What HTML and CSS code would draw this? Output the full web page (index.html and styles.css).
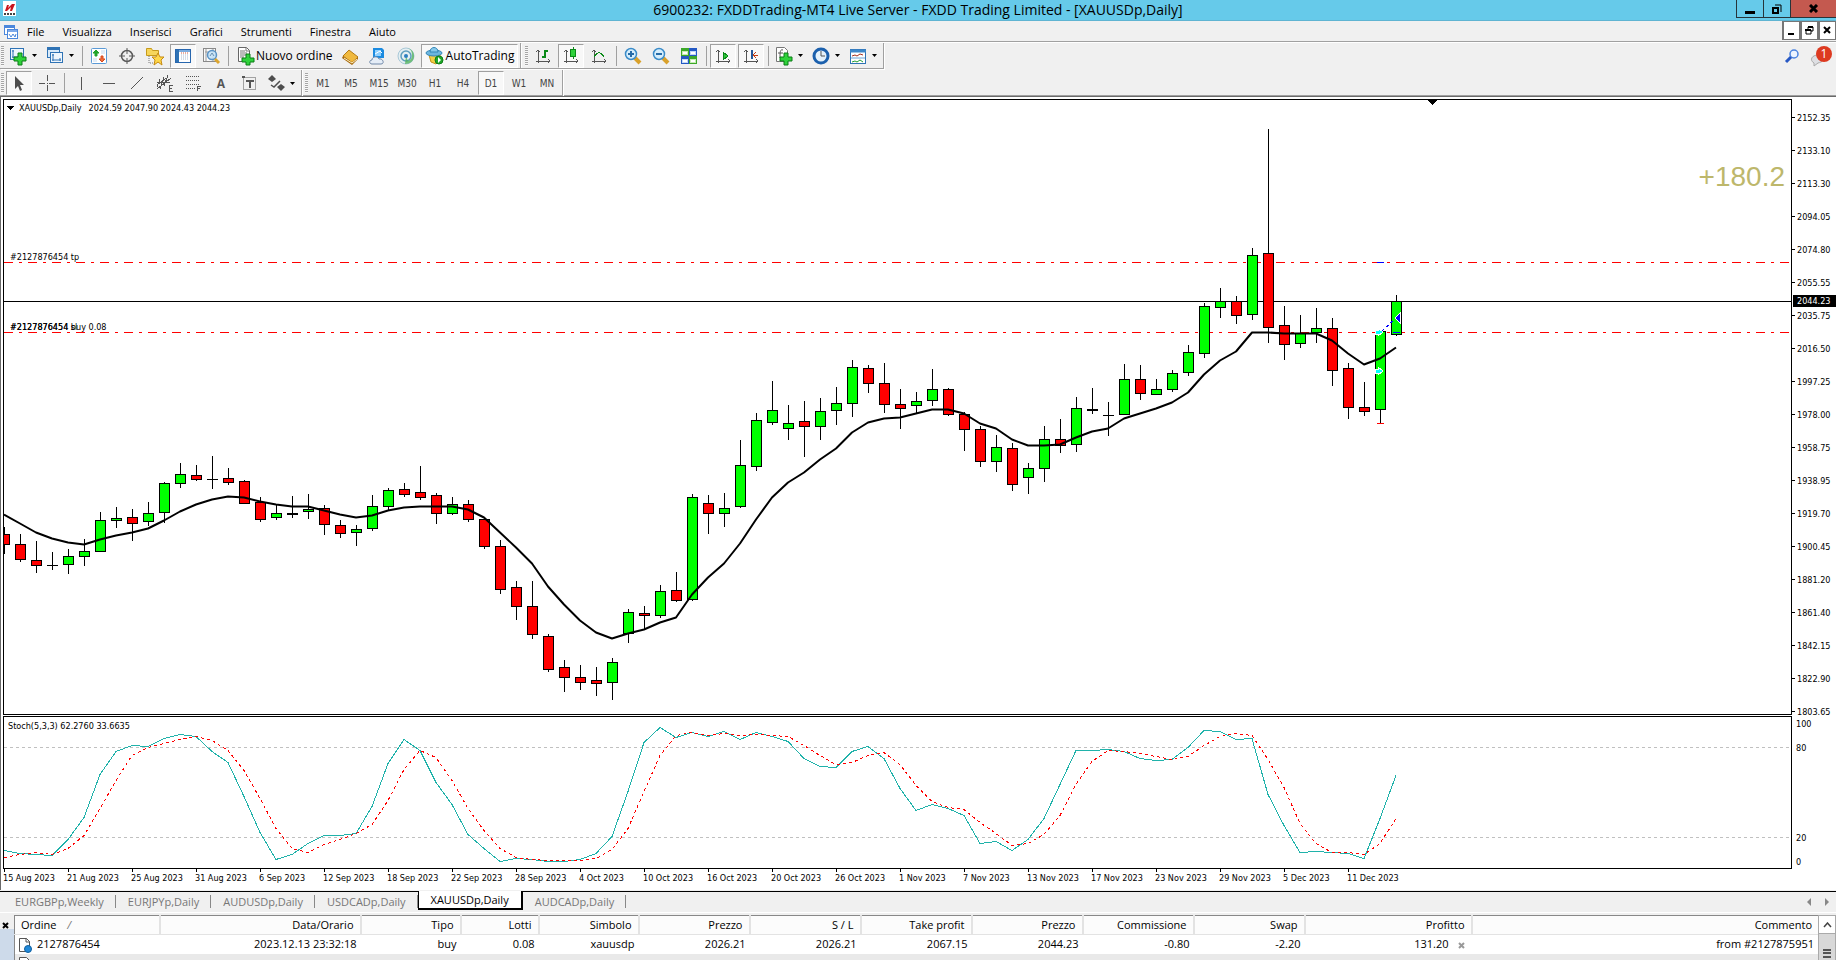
FILE: index.html
```
<!DOCTYPE html>
<html lang="it">
<head>
    <meta charset="UTF-8">
    <meta name="viewport" content="width=device-width, initial-scale=1.0">
    <title>6900232: FXDDTrading-MT4 Live Server - FXDD Trading Limited - [XAUUSDp,Daily]</title>
    <link rel="stylesheet" href="styles.css">
</head>
<body>
    <header class="titlebar">
        <svg class="app-logo" width="13" height="15" viewBox="0 0 13 15"><rect width="13" height="15" fill="#fff"/><path d="M2 10 4 4h2l-1 3 4-4h3L9 10H7l1-4-4 4z" fill="#c8141e"/><path d="M1 13h11" stroke="#444" stroke-width="2" stroke-dasharray="2 1"/></svg>
        <h1>6900232: FXDDTrading-MT4 Live Server - FXDD Trading Limited - [XAUUSDp,Daily]</h1>
        <div class="window-buttons">
            <button class="win-min" aria-label="Riduci"><svg width="10" height="10"><path d="M0 7h10v3H0z"/></svg></button>
            <button class="win-max" aria-label="Ripristina"><svg width="10" height="10"><path d="M1 4h5v5H1z" fill="none" stroke="#000" stroke-width="2"/><path d="M3 1h6v7" fill="none" stroke="#000"/></svg></button>
            <button class="win-close" aria-label="Chiudi"><svg width="10" height="9"><path d="m1 1 7 7M8 1 1 8" stroke="#000" stroke-width="3"/></svg></button>
        </div>
    </header>

    <nav class="menubar">
        <svg width="16" height="16" viewBox="0 0 16 16"><rect x="1.5" y="1.5" width="10" height="9" fill="#fff" stroke="#4b87dc"/><path d="M2 3h9" stroke="#4b87dc" stroke-width="2"/><rect x="4.5" y="5.5" width="10" height="9" fill="#fff" stroke="#4b87dc"/><path d="M5 7h9" stroke="#7eaaea" stroke-width="2"/><path d="m6 10 2 3 2-3 2 3 1-3" fill="none" stroke="#4b87dc"/></svg>
        <button>File</button>
        <button>Visualizza</button>
        <button>Inserisci</button>
        <button>Grafici</button>
        <button>Strumenti</button>
        <button>Finestra</button>
        <button>Aiuto</button>
        <div class="mdi-buttons">
            <button aria-label="Riduci grafico"><svg width="9" height="9"><path d="M1 7h6v2H1z"/></svg></button>
            <button aria-label="Ripristina grafico"><svg width="9" height="9"><path d="M1 4h5v4H1zM3 3V1h5v4H6" fill="none" stroke="#000"/><path d="M0 4h6M3 1h5" stroke="#000" stroke-width="2"/></svg></button>
            <button aria-label="Chiudi grafico"><svg width="9" height="9"><path d="m1 1 6 6M7 1 1 7" stroke="#000" stroke-width="2"/></svg></button>
        </div>
    </nav>

    <div class="toolbar">
        <div class="group">
            <span class="grip"></span>
            <button class="tool drop" aria-label="Nuovo grafico"><svg width="20" height="20"><rect x="2.5" y="2.5" width="13" height="11" fill="#eef6fd" stroke="#2f73b5"/><path d="M5 4v8M4 5h2M4 11h10M12 9v3" stroke="#2f73b5" fill="none"/><path d="M10 7h4v4h4v4h-4v4h-4v-4H6v-4h4z" fill="#2fd23b" stroke="#0a7d17"/></svg><svg class="caret" width="5" height="3"><path d="M0 0h5L2.5 3z"/></svg></button>
            <button class="tool drop" aria-label="Profili"><svg width="20" height="20"><rect x="2.5" y="1.5" width="12" height="10" fill="#d8eafa" stroke="#2f73b5"/><path d="M3 3h11" stroke="#2f73b5" stroke-width="2"/><rect x="5.5" y="6.5" width="12" height="10" fill="#eef6fd" stroke="#2f73b5"/><path d="M8 8v7M7 9h2M7 14h9M15 12v3" stroke="#2f73b5"/></svg><svg class="caret" width="5" height="3"><path d="M0 0h5L2.5 3z"/></svg></button>
            <span class="sep"></span>
            <button class="tool" aria-label="Market Watch"><svg width="20" height="20"><rect x="2.5" y="2.5" width="15" height="15" rx="1" fill="#fff" stroke="#5b9ad6"/><path d="M12 5h4M12 7h4M4 13h4M4 15h4" stroke="#c4daf0"/><path d="m7 4 3 3H8v3H6V7H4z" fill="#22a32b" stroke="#22a32b"/><path d="m13 16-3-3h2v-3h2v3h2z" fill="#f0703c" stroke="#d8481f"/></svg></button>
            <button class="tool" aria-label="Finestra dati"><svg width="20" height="20"><circle cx="10" cy="10" r="5.5" fill="none" stroke="#5a5a5a" stroke-width="1.5"/><path d="M10 2v6M10 12v6M2 10h6M12 10h6" stroke="#5a5a5a"/></svg></button>
            <button class="tool" aria-label="Preferiti"><svg width="20" height="20"><path d="M1.500 4V2.500h5l1 2h6v5h-12z" fill="#f7d65a" stroke="#c69a1b"/><path d="M4 10v7h7" fill="none" stroke="#777" stroke-dasharray="1 1"/><path d="m13 7 2 4h4l-3 3 1 5-4-3-4 3 1-5-3-3h4z" fill="#ffd84a" stroke="#c68b12"/></svg></button>
            <button class="tool pressed" aria-label="Navigatore"><svg width="20" height="20"><rect x="2.5" y="3.5" width="15" height="13" fill="#fff" stroke="#2766ae"/><path d="M3 5h14" stroke="#79acdf" stroke-width="2"/><path d="M3 4h3v12H3z" fill="#2f73b5"/><path d="M8 7h8" stroke="#d4583b" stroke-dasharray="1 1"/><path d="M8 9h8M8 11h8M8 13h8" stroke="#a5bcd2" stroke-dasharray="1 1"/></svg></button>
            <button class="tool" aria-label="Tester strategia"><svg width="20" height="20"><rect x="2.5" y="2.5" width="12" height="13" fill="#fafafa" stroke="#8a8a8a"/><path d="M5 3v12M12 3v12M4 6h3" stroke="#9b9b9b"/><circle cx="11" cy="9" r="4.5" fill="#c5e3f7" fill-opacity=".9" stroke="#5b94c6" stroke-width="1.5"/><path d="m9 10 2-3 2 3" stroke="#6b93b5" fill="none"/><path d="m14 13 4 4" stroke="#dca52d" stroke-width="3"/></svg></button>
            <span class="sep"></span>
            <button class="tool order"><svg width="20" height="20"><path d="M3.500 1.500h8l3 3v11h-11z" fill="#fff" stroke="#666"/><path d="M11 2v3h3M5 5h5M5 7h7M5 9h7M5 11h4" stroke="#777" fill="none"/><path d="M11 8h4v4h4v4h-4v3h-4v-3H7v-4h4z" fill="#2fd23b" stroke="#0a7d17"/></svg><span>Nuovo ordine</span></button>
            <button class="tool" aria-label="MetaEditor"><svg width="20" height="20"><path d="m3 10 6-6 9 7-6 6z" fill="#f0b93e" stroke="#b47a14"/><path d="m3 10 9 6 6-5v2l-6 6-10-7z" fill="#a96c10"/><path d="m4 12 8 5 5-4" fill="none" stroke="#fff2c5"/></svg></button>
            <button class="tool" aria-label="MQL5"><svg width="20" height="20"><path d="M5 2h9l2 2v8H5z" fill="#1c8be0"/><path d="M7 4h6v6H7z" fill="#8ed0ff"/><path d="m7 8 5-3 2 2" stroke="#fff" fill="none"/><path d="M4 18c-3 0-3-4 0-4 0-4 6-4 7-1 4-1 6 5 2 5z" fill="#e5edf7" stroke="#7088a8"/></svg></button>
            <button class="tool" aria-label="Segnali"><svg width="20" height="20"><circle cx="10" cy="10" r="8" fill="#e5eff2" stroke="#a9c8d8"/><circle cx="10" cy="10" r="5" fill="none" stroke="#5f9fbe" stroke-width="1.5"/><path d="M10 10 9 18c5 0 9-3 9-8s-4-8-8-8c4 0 6 3 6 7s-2 5-4 6z" fill="#4bb054" fill-opacity=".75"/><circle cx="10" cy="10" r="2" fill="#2d7fc0"/></svg></button>
            <button class="tool auto pressed"><svg width="20" height="20"><path d="m4 9 2 7 5 2 5-6-1-3z" fill="#f3cf43" stroke="#c19319"/><ellipse cx="9" cy="7" rx="8" ry="3" fill="#6bb6df" stroke="#3486b6"/><path d="M5 6c0-6 8-6 8 0z" fill="#86c9eb" stroke="#3486b6"/><circle cx="14" cy="14" r="4" fill="#20a828" stroke="#0e7d18"/><path d="m13 11 3 3-3 3z" fill="#fff"/></svg><span>AutoTrading</span></button>
        </div>
        <div class="group">
            <span class="grip"></span>
            <button class="tool" aria-label="Grafico a barre"><svg class="axis" width="20" height="20"><path d="M5 4v13M3 15h14M3 6l2-2 2 2M15 13l2 2-2 2"/><path class="green" d="M12 4v8M12 5h3M9 11h3" stroke-width="2"/></svg></button>
            <button class="tool pressed" aria-label="Candele"><svg class="axis" width="20" height="20"><path d="M5 4v13M3 15h14M3 6l2-2 2 2M15 13l2 2-2 2"/><path d="M12 1v12" stroke="#0a8a18"/><rect x="9.5" y="3.5" width="5" height="7" fill="#2fd23b" stroke="#0a8a18"/></svg></button>
            <button class="tool" aria-label="Linea"><svg class="axis" width="20" height="20"><path d="M5 4v13M3 15h14M3 6l2-2 2 2M15 13l2 2-2 2"/><path class="green" d="M5 11c4-6 7-5 10 0"/></svg></button>
            <span class="sep"></span>
            <button class="tool" aria-label="Zoom avanti"><svg width="20" height="20"><path d="m12 12 5 5" stroke="#d9a12b" stroke-width="4"/><circle cx="8" cy="8" r="5.5" fill="#d6eefc" stroke="#3b8cc9" stroke-width="1.5"/><path d="M5 8h6M8 5v6" stroke="#276ca8" stroke-width="2"/></svg></button>
            <button class="tool" aria-label="Zoom indietro"><svg width="20" height="20"><path d="m12 12 5 5" stroke="#d9a12b" stroke-width="4"/><circle cx="8" cy="8" r="5.5" fill="#d6eefc" stroke="#3b8cc9" stroke-width="1.5"/><path d="M5 8h6" stroke="#276ca8" stroke-width="2"/></svg></button>
            <button class="tool" aria-label="Affianca"><svg width="20" height="20"><path d="M2 2h8v8H2zM10 10h8v8h-8z" fill="#3ca829"/><path d="M10 2h8v8h-8zM2 10h8v8H2z" fill="#2459c4"/><path d="M3 5h6v4H3zM11 13h6v4h-6z" fill="#c6ecb4"/><path d="M11 5h6v4h-6zM3 13h6v4H3z" fill="#c3d8f8"/><path d="M4 7h4M12 7h4M4 15h4M12 15h4" stroke="#fff" stroke-width="2"/></svg></button>
            <span class="sep"></span>
            <button class="tool pressed" aria-label="Scorrimento automatico"><svg class="axis" width="20" height="20"><path d="M5 4v13M3 15h14M3 6l2-2 2 2M15 13l2 2-2 2"/><path d="m10 6 5 4-5 4z" fill="#2fc23b" stroke="#0a8a18"/></svg></button>
            <button class="tool pressed" aria-label="Spostamento grafico"><svg class="axis" width="20" height="20"><path d="M5 4v13M3 15h14M3 6l2-2 2 2M15 13l2 2-2 2"/><path d="M11 4v9" stroke="#23579a" stroke-width="2"/><path d="M12 9h5M15 6l-3 3 3 3" stroke="#c43c10"/></svg></button>
            <span class="sep"></span>
            <button class="tool drop" aria-label="Indicatori"><svg width="20" height="20"><path d="M2.500 1.500h8l3 3v11h-11z" fill="#fff" stroke="#777"/><path d="M9 4c-3-1-3 2-3 8M4 7h5" stroke="#555" fill="none"/><path d="M10 7h4v4h4v4h-4v4h-4v-4H6v-4h4z" fill="#2fd23b" stroke="#0a7d17"/></svg><svg class="caret" width="5" height="3"><path d="M0 0h5L2.5 3z"/></svg></button>
            <button class="tool drop" aria-label="Periodi"><svg width="20" height="20"><circle cx="10" cy="10" r="7" fill="#e4f2fc" stroke="#1b60ad" stroke-width="3"/><path d="M10 5v5h4" fill="none" stroke="#555"/></svg><svg class="caret" width="5" height="3"><path d="M0 0h5L2.5 3z"/></svg></button>
            <button class="tool drop" aria-label="Modelli"><svg width="20" height="20"><rect x="2.5" y="3.5" width="15" height="14" fill="#fff" stroke="#2f73b5"/><path d="M2 5h16" stroke="#3d87c9" stroke-width="3"/><path d="m4 10 3-1 2 1 3-2 3 1" fill="none" stroke="#a72f1c"/><path d="M3 12h14" stroke="#6ca4d6"/><path d="m4 16 3-1 2 1 3-2 3 2" fill="none" stroke="#249e31"/></svg><svg class="caret" width="5" height="3"><path d="M0 0h5L2.5 3z"/></svg></button>
        </div>
        <div class="notifications">
            <button aria-label="Cerca"><svg width="16" height="16"><circle cx="10" cy="5" r="4" fill="#edf4ff" stroke="#4b83df" stroke-width="1.5"/><path d="m7 8-5 5" stroke="#2758c4" stroke-width="3"/></svg></button>
            <button class="bubble" aria-label="Messaggi"><svg width="16" height="16"><path d="M4 12c-5-3-2-8 4-8s9 6 0 8l-4 3z" fill="#dedfe3" stroke="#aaa"/></svg><span class="badge">1</span></button>
        </div>
    </div>

    <div class="toolbar second">
        <div class="group">
            <span class="grip"></span>
            <button class="tool pressed" aria-label="Cursore"><svg width="20" height="20"><path d="M6 3v13l3-3 2 5 2-1-2-5h4z" fill="#4d4d4d"/></svg></button>
            <button class="tool" aria-label="Mirino"><svg class="line" width="20" height="20"><path d="M10 2v6M10 12v6M2 10h6M12 10h6M10 10h1"/></svg></button>
            <span class="sep"></span>
            <button class="tool" aria-label="Linea verticale"><svg class="line" width="20" height="20"><path d="M10 4v13"/></svg></button>
            <button class="tool" aria-label="Linea orizzontale"><svg class="line" width="20" height="20"><path d="M4 10h12"/></svg></button>
            <button class="tool" aria-label="Linea di tendenza"><svg class="line" width="20" height="20"><path d="M4 16 16 4"/></svg></button>
            <button class="tool" aria-label="Canale"><svg class="line" width="20" height="20"><path d="m2 12 9-7M2 16 16 5M5 16l4-12M2 14l3-8M9 13l4-11M2 9h13"/><path d="M18 12h-4v6h4M14 15h3"/></svg></button>
            <button class="tool" aria-label="Fibonacci"><svg class="line" width="20" height="20"><path d="M3 3h14M3 7h14M3 11h14M3 15h9" stroke-dasharray="1 1"/><path d="M18 13h-4v5M14 15h3"/></svg></button>
            <button class="tool letter">A</button>
            <button class="tool" aria-label="Etichetta"><svg width="20" height="20"><rect x="4.5" y="4.5" width="12" height="12" fill="none" stroke="#555" stroke-dasharray="1 1"/><path d="M3 3h3v2H3z" fill="#555"/><path d="M7 8h8M11 8v7" stroke="#555" stroke-width="2"/></svg></button>
            <button class="tool drop" aria-label="Frecce"><svg width="20" height="20"><path d="m2 6 4-4 4 4-4 3zM11 14l4-3 4 3-4 4z" fill="#4d4d4d"/><path d="m5 12 3 2 6-6" fill="none" stroke="#4d4d4d" stroke-width="1.5"/></svg><svg class="caret" width="5" height="3"><path d="M0 0h5L2.5 3z"/></svg></button>
        </div>
        <div class="group">
            <span class="grip"></span>
            <button class="tool period">M1</button>
            <button class="tool period">M5</button>
            <button class="tool period">M15</button>
            <button class="tool period">M30</button>
            <button class="tool period">H1</button>
            <button class="tool period">H4</button>
            <button class="tool period pressed">D1</button>
            <button class="tool period">W1</button>
            <button class="tool period">MN</button>
        </div>
    </div>

    <main class="chart">
        <section class="plot price">
            <svg id="priceChart" class="drawing"></svg>
            <p class="caption"><span>XAUUSDp,Daily</span> <span>2024.59 2047.90 2024.43 2044.23</span></p>
            <p class="order-label tp">#2127876454 tp</p>
            <p class="order-label buy">#2127876454 buy 0.08</p>
            <p class="order-label buy">#2127876454 sl</p>
            <p class="pips">+180.2</p>
        </section>
        <div class="scale price-scale">
            <ol id="priceScale"></ol>
            <span class="current">2044.23</span>
        </div>
        <section class="plot stoch">
            <svg id="stochChart" class="drawing"></svg>
            <p class="caption">Stoch(5,3,3) 62.2760 33.6635</p>
        </section>
        <div class="scale stoch-scale">
            <span class="s100">100</span>
            <span class="s80">80</span>
            <span class="s20">20</span>
            <span class="s0">0</span>
        </div>
        <ol id="dates" class="dates"></ol>
    </main>

    <nav class="tabs">
        <button>EURGBPp,Weekly</button>
        <button>EURJPYp,Daily</button>
        <button>AUDUSDp,Daily</button>
        <button>USDCADp,Daily</button>
        <button class="active">XAUUSDp,Daily</button>
        <button>AUDCADp,Daily</button>
        <div class="tab-scroll">
            <button aria-label="Indietro"><svg width="4" height="8"><path d="M4 0v8L0 4z"/></svg></button>
            <button aria-label="Avanti"><svg width="4" height="8"><path d="M0 0v8l4-4z"/></svg></button>
        </div>
    </nav>

    <section class="terminal">
        <div class="side"><button aria-label="Chiudi terminale"><svg width="7" height="7"><path d="m1 1 5 5M6 1 1 6" stroke="#000" stroke-width="2"/></svg></button></div>
        <table>
            <colgroup>
                <col class="c-order"><col class="c-date"><col class="c-mid"><col class="c-lots"><col class="c-mid"><col class="c-num"><col class="c-num"><col class="c-num"><col class="c-num"><col class="c-num"><col class="c-num"><col class="c-profit"><col>
            </colgroup>
            <thead>
                <tr><th>Ordine <i>/</i></th><th>Data/Orario</th><th>Tipo</th><th>Lotti</th><th>Simbolo</th><th>Prezzo</th><th>S / L</th><th>Take profit</th><th>Prezzo</th><th>Commissione</th><th>Swap</th><th>Profitto</th><th>Commento</th></tr>
            </thead>
            <tbody>
                <tr>
                    <td><svg width="16" height="16"><path d="M1.500 1.500h7l3 3v10h-10z" fill="#fff" stroke="#555"/><path d="M8 1v4h4" fill="none" stroke="#555"/><circle cx="10" cy="12" r="3.500" fill="#2289d8" stroke="#0f5f9f"/></svg>2127876454</td>
                    <td>2023.12.13 23:32:18</td><td>buy</td><td>0.08</td><td>xauusdp</td><td>2026.21</td><td>2026.21</td><td>2067.15</td><td>2044.23</td><td>-0.80</td><td>-2.20</td>
                    <td>131.20<button class="close-order" aria-label="Chiudi ordine"><svg width="7" height="7"><path d="m1 1 5 5M6 1 1 6" stroke="#999" stroke-width="2"/></svg></button></td>
                    <td>from #2127875951</td>
                </tr>
                <tr class="balance">
                    <td colspan="13"><svg width="16" height="16"><path d="M1.500 1.500h7l3 3v10h-10z" fill="#fff" stroke="#555"/></svg></td>
                </tr>
            </tbody>
        </table>
        <div class="scrollbar">
            <button aria-label="Su"><svg width="9" height="6"><path d="m1 5 3.500-4L8 5" fill="none" stroke="#444" stroke-width="1.5"/></svg></button>
            <span class="thumb"></span>
        </div>
    </section>
    <script src="script.js"></script>
</body>
</html>
```

FILE: styles.css
```
* {
    box-sizing: border-box;
}

body {
    margin: 0;
    height: 100vh;
    display: flex;
    flex-direction: column;
    overflow: hidden;
    background: #f0f0f0;
    color: #000;
    font-family: "Open Sans", "Noto Sans", sans-serif;
    font-size: 12px;
}

button {
    margin: 0;
    padding: 0;
    border: 0;
    background: none;
    color: inherit;
    font: inherit;
    white-space: nowrap;
}

svg {
    display: block;
    flex: none;
}

p, h1, ol {
    margin: 0;
    padding: 0;
    list-style: none;
    font-weight: normal;
}

/* TITLE AND MENU */
.titlebar {
    flex: none;
    display: flex;
    align-items: flex-start;
    height: 21px;
    background: #66caea;
    border-bottom: 1px solid #5fb4d2;
}

.app-logo {
    margin: 1px 0 0 3px;
}

h1 {
    flex: 1;
    padding-left: 84px;
    font-size: 14px;
    line-height: 19px;
    text-align: center;
}

.window-buttons {
    display: flex;
    height: 18px;
}

.window-buttons button {
    display: flex;
    align-items: center;
    justify-content: center;
    width: 27px;
    border: 1px solid #27343a;
    border-width: 0 0 1px 1px;
}

.window-buttons .win-close {
    width: 46px;
    background: #c4594f;
}

.menubar {
    flex: none;
    display: flex;
    align-items: center;
    height: 22px;
    padding-left: 3px;
    border-bottom: 1px solid #fff;
    box-shadow: inset 0 -1px #a0a0a0;
    font-size: 11px;
}

.menubar > button {
    padding: 0 9px;
    line-height: 18px;
}

.menubar > svg {
    margin-right: -1px;
}

.mdi-buttons {
    display: flex;
    align-self: flex-start;
    margin-left: auto;
}

.mdi-buttons button {
    display: flex;
    align-items: center;
    justify-content: center;
    width: 18px;
    height: 19px;
    border: 1px solid #767676;
    border-left-width: 2px;
    background: #fff;
}

/* TOOLBARS */
.toolbar {
    flex: none;
    display: flex;
    height: 27px;
}

.toolbar.second {
    border-bottom: 1px solid #696969;
    box-shadow: inset 0 -1px #a0a0a0;
}

.group {
    display: flex;
    align-items: center;
    height: 26px;
    padding-right: 1px;
    border-right: 1px solid #a0a0a0;
    border-bottom: 1px solid #a0a0a0;
    box-shadow: 1px 1px #fff;
}

.second .group {
    border-bottom: 0;
    box-shadow: 1px 0 #fff;
}

.group + .group {
    padding-left: 3px;
}

.second .group + .group {
    padding-left: 2px;
}

.grip {
    width: 3px;
    height: 20px;
    margin: 0 1px;
    background: repeating-linear-gradient(#a5a5a5 0 1px, #f8f8f8 1px 2px);
}

.sep {
    width: 6px;
    height: 20px;
    background: linear-gradient(#a0a0a0, #a0a0a0) center / 1px 100% no-repeat;
}

.tool {
    display: flex;
    align-items: center;
    justify-content: center;
    width: 28px;
    height: 24px;
}

.pressed {
    width: 26px;
    margin: 0 1px;
    border: 1px solid #fff;
    border-top-color: #a0a0a0;
    border-left-color: #a0a0a0;
    background: #f8f8f8;
}

.drop {
    justify-content: flex-start;
    gap: 4px;
    width: 37px;
    padding-left: 3px;
}

.order {
    justify-content: flex-start;
    gap: 1px;
    width: 105px;
    padding-left: 4px;
}

.auto {
    gap: 1px;
    width: 97px;
}

.axis, .line {
    fill: none;
    stroke: #555;
    shape-rendering: crispEdges;
}

.axis .green {
    stroke: #0a8a18;
}

.letter {
    color: #555;
    font-size: 12px;
    font-weight: bold;
}

.period {
    color: #444;
    font-family: "DejaVu Sans Condensed", "DejaVu Sans", sans-serif;
    font-size: 10px;
}

.notifications {
    display: flex;
    gap: 10px;
    align-items: center;
    margin-left: auto;
    padding-right: 4px;
}

.bubble {
    position: relative;
    width: 22px;
    height: 20px;
    padding-top: 4px;
}

.badge {
    position: absolute;
    top: -1px;
    right: 0;
    width: 16px;
    height: 16px;
    border-radius: 50%;
    background: #dd3a20;
    color: #fff;
    font-size: 12px;
    line-height: 16px;
    text-align: center;
}

/* CHART */
.chart {
    flex: 1;
    min-height: 0;
    display: grid;
    grid-template-columns: 1fr 44px;
    grid-template-rows: 1fr 153px 20px;
    row-gap: 1px;
    padding: 2px 0 0 2px;
    border-left: 1px solid #696969;
    background: #fff;
    font-family: "DejaVu Sans Condensed", "DejaVu Sans", sans-serif;
    font-size: 9px;
    line-height: 12px;
}

.plot {
    position: relative;
    min-height: 0;
    border: 1px solid #000;
}

.drawing {
    width: 100%;
    height: 100%;
    shape-rendering: crispEdges;
}

.caption, .order-label, .pips {
    position: absolute;
    white-space: nowrap;
}

.caption {
    display: flex;
    gap: 7px;
    top: 3px;
    left: 4px;
}

.price .caption {
    top: 2px;
    left: 15px;
}

.order-label {
    left: 6px;
}

.tp {
    top: 151px;
}

.buy {
    top: 221px;
}

.pips {
    top: 61px;
    right: 6px;
    color: #bdb76b;
    font: 28px/32px "Liberation Sans", Arial, sans-serif;
}

.scale {
    position: relative;
    min-height: 0;
}

.price-scale li {
    display: flex;
    align-items: center;
    height: 33px;
}

.price-scale ol {
    margin-top: 2px;
}

.price-scale li::before {
    content: "";
    width: 3px;
    height: 1px;
    margin-right: 2px;
    background: #000;
}

.current {
    position: absolute;
    top: 196px;
    left: 1px;
    right: 0;
    padding-left: 4px;
    background: #000;
    color: #fff;
}

.stoch-scale span {
    position: absolute;
    left: 4px;
}

.s100 { top: 2px; }
.s80 { top: 26px; }
.s20 { top: 116px; }
.s0 { top: 140px; }

.dates {
    grid-column: 1 / 3;
    display: flex;
    margin-top: -1px;
    white-space: nowrap;
}

.dates li {
    width: 64px;
    flex: none;
}

.dates li::before {
    content: "";
    display: block;
    width: 1px;
    height: 3px;
    margin-left: 1px;
    background: #000;
}

/* CHART TABS */
.tabs {
    flex: none;
    display: flex;
    height: 21px;
    margin-top: 1px;
    border-top: 1px solid #000;
    color: #777;
    font-size: 11px;
}

.tabs > button {
    height: 19px;
    padding: 0 12px;
    line-height: 18px;
    background: linear-gradient(#888, #888) right 3px / 1px 13px no-repeat;
}

.tabs > button:first-child {
    padding-left: 15px;
}

.tabs .active {
    margin-top: -1px;
    border: 1px solid #000;
    border-width: 0 2px 2px 1px;
    background: #fff;
    color: #000;
}

.tab-scroll {
    display: flex;
    align-items: center;
    gap: 14px;
    margin-left: auto;
    padding-right: 7px;
    fill: #888;
}

/* TERMINAL */
.terminal {
    flex: none;
    display: flex;
    height: 48px;
    border-top: 1px solid #fff;
    padding-top: 2px;
    overflow: hidden;
    font-size: 11px;
}

.side {
    width: 14px;
    height: 46px;
    padding: 2px 0 0 2px;
    background: linear-gradient(#f0f0f0 14px, #cddaea 14px);
}

table {
    flex: 1;
    table-layout: fixed;
    width: 100%;
    height: 58px;
    border-collapse: collapse;
    border-top: 1px solid #888;
    border-left: 1px solid #888;
    background: #fff;
    text-align: right;
}

th, td {
    height: 19px;
    padding: 0 4px 0 0;
    line-height: 18px;
    white-space: nowrap;
}

th {
    padding-right: 6px;
    border-right: 2px solid #e3e3e3;
    border-bottom: 1px solid #e3e3e3;
    background: #fcfcfc;
    font-weight: normal;
    text-align: right;
}

th:first-child {
    padding-left: 6px;
    text-align: left;
}

th:last-child {
    border-right: 0;
}

th i {
    margin-left: 8px;
    color: #777;
}

td:first-child {
    padding-left: 3px;
    text-align: left;
}

td svg {
    display: inline-block;
    margin-right: 3px;
    vertical-align: middle;
}

.balance td {
    background: #e9e9e9;
}

.c-order { width: 145px; }
.c-date { width: 201px; }
.c-mid { width: 100px; }
.c-lots { width: 78px; }
.c-num { width: 111px; }
.c-profit { width: 167px; }

.close-order {
    margin-left: 9px;
}

.scrollbar {
    width: 18px;
    border: 1px solid #aaa;
    background: #f0f0f0;
}

.scrollbar button {
    display: flex;
    align-items: center;
    justify-content: center;
    width: 16px;
    height: 17px;
    background: #fff;
}

.thumb {
    display: block;
    height: 60px;
    border-top: 1px solid #aaa;
    background: linear-gradient(#555 0 2px, transparent 2px 3px, #555 3px 5px, transparent 5px 7px, #555 7px 9px) center 15px / 8px 9px no-repeat #d8d8d8;
}
```

FILE: script.js
```
const STEP = 16;

// high, body top, body bottom, low, colour (g = up, r = down, k = doji)
const candles = `
527,534,544,553,r 534,544,559,561,r 541,560,565,572,r 552,565,565,569,k 549,556,564,573,g 539,551,556,565,g
512,520,551,551,g 507,518,520,527,g 509,517,523,540,r 502,513,521,525,g 482,483,512,522,g 463,474,483,487,g
465,475,479,480,r 456,479,479,488,k 468,478,482,484,r 480,481,503,503,r 497,502,519,521,r 505,513,517,519,g
496,513,514,517,k 494,509,511,518,g 505,508,524,534,r 520,525,533,537,r 525,529,532,545,g 495,506,528,530,g
488,490,506,509,g 483,489,494,496,r 466,492,497,499,r 493,495,513,523,r 497,504,513,514,g 500,504,519,521,r
517,519,546,548,r 540,546,589,593,r 581,587,606,619,r 581,606,634,638,r 634,636,669,671,r 660,667,677,691,r
665,677,682,689,r 667,680,683,695,r 658,662,682,699,g 609,612,633,642,g 606,613,615,629,r 585,591,615,617,g
572,590,600,601,r 494,497,599,600,g 495,503,513,533,r 493,508,513,526,g 440,465,506,507,g 413,420,466,470,g
381,410,422,424,g 405,423,428,439,g 401,421,426,456,r 398,411,426,439,g 387,403,410,424,g 360,367,403,416,g
365,368,383,392,r 363,383,404,412,r 389,404,408,428,r 392,401,405,413,g 369,389,400,405,g 388,389,414,415,r
412,414,429,450,r 426,429,461,466,r 435,447,461,471,g 443,448,484,490,r 463,468,477,493,g 426,439,468,481,g
419,439,445,452,r 397,408,444,451,g 388,409,410,413,k 402,415,415,435,k 364,379,414,414,g 365,379,393,399,r
379,389,394,394,g 370,373,389,391,g 345,352,372,375,g 303,306,353,357,g 288,301,307,317,g 296,301,315,323,r
248,255,314,319,g 129,253,327,342,r 306,325,344,359,r 315,333,343,347,g 308,328,332,342,g 318,328,370,385,r
363,368,407,418,r 382,407,411,415,r 331,331,409,423,g 295,301,334,335,g`.trim().split(/\s+/).map(c => c.split(','));

const average = [514,523,532,538,542,544,539,535,532,528,520,511,504,499,496,497,501,504,506,506,510,514,517,515,510,507,506,506,506,509,517,532,547,563,586,604,620,632,638,633,629,622,617,594,577,563,543,519,497,482,472,459,448,432,422,418,417,413,409,409,413,423,428,439,445,445,444,437,431,428,418,413,408,402,392,374,360,351,332,332,333,333,333,340,353,364,358,347];

const stochMain = [850,853,854,855,839,817,774,751,745,746,738,734,736,751,762,796,832,859,854,843,835,835,833,806,763,739,750,782,804,834,848,861,858,859,861,861,859,853,836,791,742,727,737,732,736,731,739,732,736,741,758,766,767,751,746,758,788,810,804,808,815,843,841,850,839,818,784,750,750,749,751,758,760,759,747,730,731,739,738,794,825,852,851,852,853,858,818,775];

const stochSignal = [857,854,852,854,848,835,808,780,755,747,743,739,736,740,750,770,798,828,848,852,844,839,833,824,800,769,750,757,780,808,830,848,857,859,860,860,860,858,849,828,791,755,735,732,735,733,735,734,735,736,745,755,764,762,755,752,764,785,801,807,809,822,833,845,843,834,815,784,761,750,751,753,756,759,756,745,736,733,735,759,787,823,843,852,852,854,843,818];

const prices = ['2152.35', '2133.10', '2113.30', '2094.05', '2074.80', '2055.55', '2035.75', '2016.50', '1997.25', '1978.00', '1958.75', '1938.95', '1919.70', '1900.45', '1881.20', '1861.40', '1842.15', '1822.90', '1803.65'];

const dates = ['15 Aug', '21 Aug', '25 Aug', '31 Aug', '6 Sep', '12 Sep', '18 Sep', '22 Sep', '28 Sep', '4 Oct', '10 Oct', '16 Oct', '20 Oct', '26 Oct', '1 Nov', '7 Nov', '13 Nov', '17 Nov', '23 Nov', '29 Nov', '5 Dec', '11 Dec'];

const colours = { g: '#00ff00', r: '#ff0000', k: '#000000' };

function polyline(values, top, attrs) {
    const points = values.map((y, i) => `${i * STEP},${y - top + 0.5}`).join(' ');
    return `<polyline points="${points}" fill="none" ${attrs}/>`;
}

function level(y, attrs) {
    return `<line x1="0" x2="100%" y1="${y + 0.5}" y2="${y + 0.5}" ${attrs}/>`;
}

function drawPrice() {
    const top = 100;
    const redDash = 'stroke="#f00" stroke-dasharray="9 6 3 6"';
    let out = level(162, redDash) + level(232, redDash) + level(201, 'stroke="#000"');

    candles.forEach(([high, open, close, low, colour], i) => {
        const x = i * STEP;
        out += `<rect x="${x}" y="${high - top}" width="1" height="${low - high + 1}"/>`;
        out += `<rect x="${x - 5}" y="${open - top}" width="11" height="${close - open + 1}"/>`;
        if (close - open > 1) {
            out += `<rect x="${x - 4}" y="${open - top + 1}" width="9" height="${close - open - 1}" fill="${colours[colour]}"/>`;
        }
    });

    out += polyline(average, top, 'stroke="#000" stroke-width="2" stroke-linejoin="round" shape-rendering="geometricPrecision"');

    // trade markers
    out += '<path d="M1373 162.5h7M1389 232.5h7" stroke="#00f"/>';
    out += '<path d="M1373 323.5h7" stroke="#f00"/>';
    out += '<path d="m1378 231 14-13" stroke="#00f" stroke-dasharray="3 3"/>';
    out += '<path d="m1396 213-5 5 5 5z" fill="#00f" stroke="#fff"/>';
    for (const y of [232, 271]) {
        out += `<path d="M1371 ${y - 2}h3v-2l5 4-5 4v-2h-3z" fill="#0ff" stroke="#fff"/>`;
    }
    out += '<path d="M1423 0h10l-5 5z"/>';
    out += '<path d="M3 6h7l-3.500 4z"/>';
    document.getElementById('priceChart').innerHTML = out;
}

function drawStoch() {
    const top = 717;
    const grey = 'stroke="#c0c0c0" stroke-dasharray="3 3"';
    document.getElementById('stochChart').innerHTML =
        level(30, grey) + level(120, grey) +
        polyline(stochMain, top, 'stroke="#20b2aa"') +
        polyline(stochSignal, top, 'stroke="#f00" stroke-dasharray="3 3"');
}

drawPrice();
drawStoch();
document.getElementById('priceScale').innerHTML = prices.map(p => `<li>${p}</li>`).join('');
document.getElementById('dates').innerHTML = dates.map(d => `<li>${d} 2023</li>`).join('');
```
